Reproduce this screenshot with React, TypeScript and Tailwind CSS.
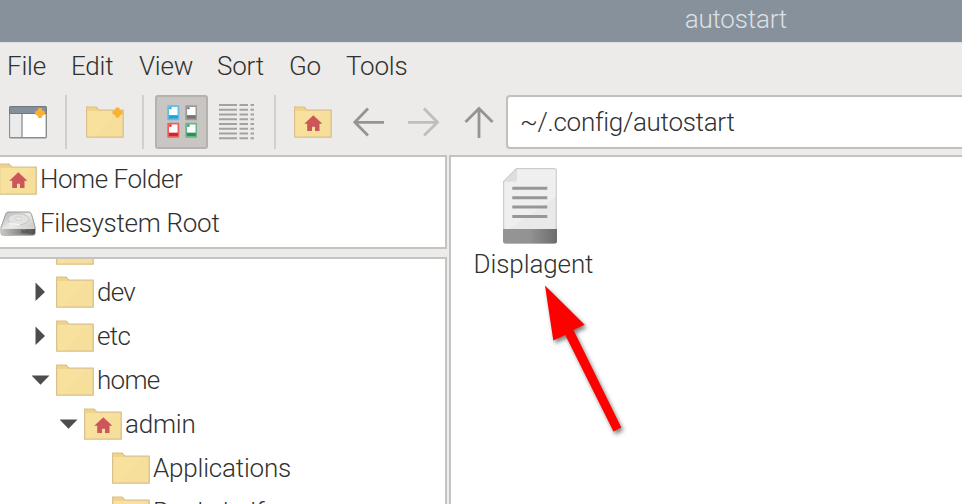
import React from "react";

function Home() {
  return <path d="M19.3 9.3 L28.3 17.8 H25.5 V25 H21 V20.8 H18 V25 H13.2 V17.8 H10.3 Z" fill="#cb575a" />;
}

function Folder({ home = false, star = false }: { home?: boolean; star?: boolean }) {
  return (
    <svg width="38" height="32" viewBox="0 0 38 32" className="block shrink-0">
      <path d="M0.7 31.2 V1.2 H10 L13 4.2 H37.2 V31.2 Z" fill="#f6df9b" stroke="#d9c08c" strokeWidth="1.3" />
      <path d="M1.4 1.9 H9.8 L12.8 4.9 H1.4 Z" fill="#efd387" />
      <path d="M1.4 5 H31 L8 30.5 H1.4 Z" fill="#f8e29d" opacity=".6" />
      {home && <Home />}
      {star && <Spark x={31.5} y={6.5} />}
    </svg>
  );
}

function Spark({ x, y }: { x: number; y: number }) {
  return (
    <path
      transform={`translate(${x} ${y})`}
      d="M-1.5 -5 H1.5 L2.6 -2.6 L5 -1.5 V1.5 L2.6 2.6 L1.5 5 H-1.5 L-2.6 2.6 L-5 1.5 V-1.5 L-2.6 -2.6 Z"
      fill="#f9b035"
    />
  );
}

function NewWindow() {
  return (
    <svg width="38" height="33" viewBox="0 0 38 33" className="block shrink-0">
      <rect x="0.7" y="0.7" width="36.6" height="31" rx="1" fill="#fff" stroke="#8c8c8e" strokeWidth="1.4" />
      <rect x="1.4" y="8" width="11.6" height="23" fill="#ebebeb" />
      <path d="M0.6 7.5 V1.5 Q0.6 0.6 1.5 0.6 H36.5 Q37.4 0.6 37.4 1.5 V7.5 Z" fill="#85909a" stroke="#6e7983" />
      <path d="M13 8 V31" stroke="#a0a0a0" strokeWidth="1.6" />
      <Spark x={31} y={7} />
    </svg>
  );
}

function MiniDoc({ x, y, edge, foot }: { x: number; y: number; edge: string; foot: string }) {
  return (
    <g transform={`translate(${x} ${y})`}>
      <rect width="12" height="15" rx="1" fill={edge} />
      <path d="M4.2 1.6 H10.2 V10 H1.8 V4 H4.2 Z" fill="#fff" />
      <path d="M1.8 3.8 L4 1.6 V3.8 Z" fill={foot} />
      <rect x="1.5" y="10" width="9" height="3.2" fill={foot} />
    </g>
  );
}

function GridIcon() {
  return (
    <svg width="30" height="34" viewBox="0 0 30 34" className="block">
      <MiniDoc x={0.3} y={0.3} edge="#63bde9" foot="#259fd5" />
      <MiniDoc x={18.3} y={0.3} edge="#9b9b9b" foot="#747474" />
      <MiniDoc x={0.3} y={17.8} edge="#ec605f" foot="#cb2930" />
      <MiniDoc x={18.3} y={17.8} edge="#66b68b" foot="#39895a" />
    </svg>
  );
}

const listRows = [0, 1, 2, 3, 4, 5, 6, 7];

function ListIcon() {
  return (
    <svg width="36" height="38" viewBox="0 0 36 38" className="block shrink-0">
      {listRows.map((r) => (
        <path key={r} d={`M0 ${2 + r * 4.75} H18 M20.5 ${2 + r * 4.75} H29 M31.5 ${2 + r * 4.75} H35`} stroke="#a2a3a1" strokeWidth="2" />
      ))}
    </svg>
  );
}

function Arrow({ d, color = "#949494" }: { d: string; color?: string }) {
  return (
    <svg width="32" height="32" viewBox="0 0 32 32" className="block shrink-0">
      <path d={d} fill="none" stroke={color} strokeWidth="2.8" />
    </svg>
  );
}

function Drive() {
  return (
    <svg width="36" height="26" viewBox="0 0 36 26" className="block shrink-0">
      <defs>
        <linearGradient id="lid" x1="0" y1="0" x2="1" y2="1">
          <stop offset="0" stopColor="#b0b2af" />
          <stop offset=".45" stopColor="#ebebea" />
          <stop offset="1" stopColor="#b7b8b6" />
        </linearGradient>
        <linearGradient id="front" x1="0" y1="0" x2="1" y2="0">
          <stop offset="0" stopColor="#c8c9c7" />
          <stop offset=".5" stopColor="#8d8f8c" />
          <stop offset="1" stopColor="#4d4f4c" />
        </linearGradient>
      </defs>
      <path d="M8 1 H29 Q30.8 1 31.6 3.5 L35.2 16.5 V22 Q35.2 24.2 33 24.2 H3.4 Q1 24.2 1 22 V16.5 L5.7 3 Q6.5 1 8 1 Z" fill="url(#lid)" stroke="#9a9c99" />
      <path d="M1.3 17.5 H35 V22 Q35 23.8 33 23.8 H3.4 Q1.3 23.8 1.3 22 Z" fill="url(#front)" />
      <path d="M1.8 17.2 H34.4" stroke="#eeeeed" />
      <ellipse cx="18.5" cy="8.3" rx="10.5" ry="5.5" fill="#e2e2e1" stroke="#c4c5c3" />
      <ellipse cx="18.5" cy="7.5" rx="3.6" ry="1.6" fill="#eeeeee" stroke="#c6c7c5" strokeWidth=".8" />
      <path d="M9 12.5 L20 13.8" stroke="#f6f6f6" strokeWidth="1.6" />
      <path d="M22 19 V22 M24 19 V22 M26 19 V22 M28 19 V22" stroke="#3f413e" strokeWidth=".8" />
    </svg>
  );
}

function DocumentIcon() {
  return (
    <svg width="54" height="76" viewBox="0 0 54 76" className="block">
      <defs>
        <linearGradient id="foot" x1="0" y1="0" x2="1" y2="0">
          <stop offset="0" stopColor="#959595" />
          <stop offset=".5" stopColor="#929292" />
          <stop offset="1" stopColor="#6c6c6c" />
        </linearGradient>
      </defs>
      <path d="M13.5 0.7 H51 Q53.2 0.7 53.2 2.5 V73 Q53.2 75 51 75 H3 Q0.7 75 0.7 73 V13.5 Z" fill="#e9e9e9" stroke="#cbcbcb" strokeWidth="1.3" />
      <path d="M14 1.5 H52.5 V29 L6 61 H1.5 V14 Z" fill="#efefef" />
      <path d="M14 1.5 V11.5 Q14 13.8 11.5 13.8 H1.2 Z" fill="#dedede" />
      <path d="M0 61 H54 V73 Q54 75.5 51.5 75.5 H2.5 Q0 75.5 0 73 Z" fill="url(#foot)" />
      <path d="M9.3 20.3 H44.3 M9.3 29.7 H44.3 M9.3 39.1 H44.3 M9.3 48.5 H44.3" stroke="#979797" strokeWidth="3" />
    </svg>
  );
}

function Separator({ className }: { className: string }) {
  return <div className={`h-[54px] w-[2px] shrink-0 bg-[#d1d0ce] ${className}`} />;
}

function TreeRow({ indent, label, state, home }: { indent: string; label: string; state: "open" | "closed" | "none"; home?: boolean }) {
  return (
    <div className={`flex h-11 shrink-0 items-center ${indent}`}>
      <svg width="24" height="20" viewBox="0 0 24 20" className="block shrink-0">
        {state === "closed" && <path d="M3.5 0.5 V19 L13 10 Z" fill="#4c4e4d" />}
        {state === "open" && <path d="M-0.5 5.5 H17.5 L8.5 14.7 Z" fill="#4c4e4d" />}
      </svg>
      <Folder home={home} />
      <span className={`ml-[3px] leading-8 ${label.length < 5 ? "tracking-[-0.7px]" : "tracking-[-0.2px]"}`}>{label}</span>
    </div>
  );
}

export default function App() {
  return (
    <div className="relative flex h-[504px] w-[962px] flex-col overflow-hidden bg-[#ecebe9] font-['Roboto',sans-serif] text-[26px] font-light tracking-[-0.2px] whitespace-nowrap text-[#303231]">
      <header className="flex h-[42px] shrink-0 justify-end bg-[#87919b] pt-1 pr-[175px] leading-[30px] text-[#dce0e4]">
        autostart
      </header>
      <nav className="flex h-[48px] shrink-0 border-t border-[#dedfdf] pt-[7px] pl-[7px] leading-8">
        <span className="w-16">File</span>
        <span className="w-[68px]">Edit</span>
        <span className="w-[78px]">View</span>
        <span className="w-[72px]">Sort</span>
        <span className="w-[57px]">Go</span>
        <span>Tools</span>
      </nav>
      <div className="flex h-[65px] shrink-0 items-center pb-px">
        <div className="ml-[9px]"><NewWindow /></div>
        <Separator className="ml-[18px]" />
        <div className="ml-[19px]"><Folder star /></div>
        <Separator className="ml-[18px]" />
        <div className="ml-[11px] flex h-[54px] w-[53px] shrink-0 items-center justify-center rounded-[3px] border-2 border-[#b5b1ae] bg-[#c9c5c2]"><GridIcon /></div>
        <div className="ml-[11px]"><ListIcon /></div>
        <Separator className="ml-[19px]" />
        <div className="ml-[18px]"><Folder home /></div>
        <div className="ml-[20px]"><Arrow d="M32 16.3 H3 M16 2.5 L2.8 16.3 L16 29.5" /></div>
        <div className="ml-[24px]"><Arrow color="#bebebd" d="M0 16.3 H29.5 M16 2.5 L29.5 16.3 L16 29.5" /></div>
        <div className="ml-[23px]"><Arrow d="M16 32 V2.5 M2.5 16 L16 2.5 L29.5 16" /></div>
        <div className="ml-[11px] flex h-[54px] flex-1 items-center rounded-l-[4px] border-2 border-r-0 border-[#c1c0bd] bg-white pt-px pl-3 tracking-[-0.29px]">~/.config/autostart</div>
      </div>
      <main className="flex min-h-0 flex-1 gap-[2px]">
        <aside className="flex w-[447px] shrink-0 flex-col gap-[8px]">
          <section className="h-[94px] shrink-0 border-y-2 border-r-2 border-[#c4c3bf] bg-white">
            <div className="flex h-11 items-center">
              <div className="-ml-px"><Folder home /></div>
              <span className="ml-[3px] tracking-[-0.45px]">Home Folder</span>
            </div>
            <div className="flex h-11 items-center">
              <div className="pt-px"><Drive /></div>
              <span className="ml-1 tracking-[-0.28px]">Filesystem Root</span>
            </div>
          </section>
          <section className="flex min-h-0 flex-1 flex-col overflow-hidden border-t-2 border-r-2 border-[#c4c3bf] bg-white">
            <div className="flex h-[11px] shrink-0 items-end overflow-hidden pb-[5px] pl-14"><Folder /></div>
            <TreeRow indent="pl-8" label="dev" state="closed" />
            <TreeRow indent="pl-8" label="etc" state="closed" />
            <TreeRow indent="pl-8" label="home" state="open" />
            <TreeRow indent="pl-[60px]" label="admin" state="open" home />
            <TreeRow indent="pl-[88px]" label="Applications" state="none" />
            <TreeRow indent="pl-[88px]" label="Bookshelf" state="none" />
          </section>
        </aside>
        <section className="flex-1 border-t-2 border-l-2 border-[#c4c3bf] bg-white">
          <div className="ml-[12px] flex w-[141px] flex-col items-center pt-[11px]">
            <div className="-ml-[7px]"><DocumentIcon /></div>
            <span className="mt-[3px] leading-[34px] tracking-[-0.1px]">Displagent</span>
          </div>
        </section>
      </main>
      <svg width="90" height="160" viewBox="0 0 90 160" className="absolute top-[283px] left-[542px] drop-shadow-[2px_3px_2px_rgba(0,0,0,0.5)]">
        <path d="M3 2.5 L42.7 41.7 L31.5 47 L79.3 144.5 L71.5 148.5 L23.3 52 L11.3 57.4 Z" fill="#fe0000" />
      </svg>
    </div>
  );
}
